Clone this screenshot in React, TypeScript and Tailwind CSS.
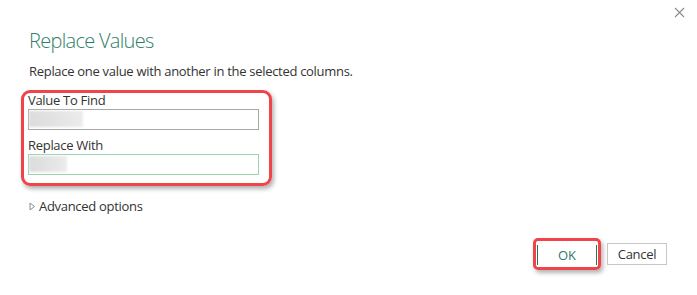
import { useState } from 'react'

function CloseIcon() {
  return (
    <svg width="11" height="11" viewBox="0 0 11 11" className="text-[#8a8a8a]">
      <path d="M1 1 L10 10 M10 1 L1 10" stroke="currentColor" strokeWidth="1.1" fill="none" />
    </svg>
  )
}

function Field({ label, blurWidth, focused }: { label: string; blurWidth: number; focused?: boolean }) {
  return (
    <div className="flex flex-col">
      <label className="h-[16px] text-[13px] leading-[14px] tracking-[-0.3px] text-[#333]">{label}</label>
      <div
        className={`relative h-[21px] w-[231px] border bg-white ${
          focused ? 'border-[#9ad5b0]' : 'border-[#a8a8a8]'
        }`}
      >
        {/* blurred value from the original screenshot */}
        <div
          className="absolute left-0 top-[1px] h-[16px] bg-gradient-to-r from-[#dcdcdc] via-[#e3e3e3] to-[#ececec] blur-[1px]"
          style={{ width: blurWidth }}
        />
      </div>
    </div>
  )
}

export default function App() {
  const [showAdvanced, setShowAdvanced] = useState(false)

  return (
    <div className="relative h-[295px] w-[697px] overflow-hidden bg-white font-['Open_Sans',sans-serif]">
      <button className="absolute right-[12px] top-[7px] p-0">
        <CloseIcon />
      </button>

      <div className="flex h-full flex-col pl-[29px] pr-[29px] pt-[27px]">
        <h1 className="text-[20px] font-light leading-[28px] tracking-[-0.7px] text-[#2f8068]">Replace Values</h1>
        <p className="mt-[8px] text-[13px] leading-[17px] tracking-[-0.3px] text-[#333]">
          Replace one value with another in the selected columns.
        </p>

        <div className="-ml-[8px] mt-[10px] flex w-[251px] flex-col gap-[8px] rounded-[9px] border-[3px] border-[#f0444a] pb-[8px] pl-[4px] shadow-[2px_3px_4px_rgba(0,0,0,0.3)]">
          <Field label="Value To Find" blurWidth={54} />
          <Field label="Replace With" blurWidth={38} focused />
        </div>

        <button
          onClick={() => setShowAdvanced(!showAdvanced)}
          className="mt-[12px] flex items-center gap-[3px] self-start text-[13px] leading-[17px] tracking-[-0.3px] text-[#333]"
        >
          <svg width="7" height="9" viewBox="0 0 7 9">
            <path d="M1 1 L5.5 4.5 L1 8 Z" fill="none" stroke="#8a8a8a" strokeWidth="1" />
          </svg>
          Advanced options
        </button>

        <div className="mt-auto mb-[25px] flex items-center justify-end gap-[6px] pr-[1px]">
          <div className="rounded-[5px] border-[3px] border-[#f0444a] p-[1px] shadow-[2px_3px_4px_rgba(0,0,0,0.3)]">
            <button className="h-[20px] w-[60px] border-x border-x-[#2f6f4c] bg-white text-[13px] leading-[18px] text-[#2f7a6a]">
              OK
            </button>
          </div>
          <button className="h-[22px] w-[60px] border border-[#c6c6c6] bg-white text-[13px] leading-[18px] tracking-[-0.3px] text-[#333]">
            Cancel
          </button>
        </div>
      </div>
    </div>
  )
}
